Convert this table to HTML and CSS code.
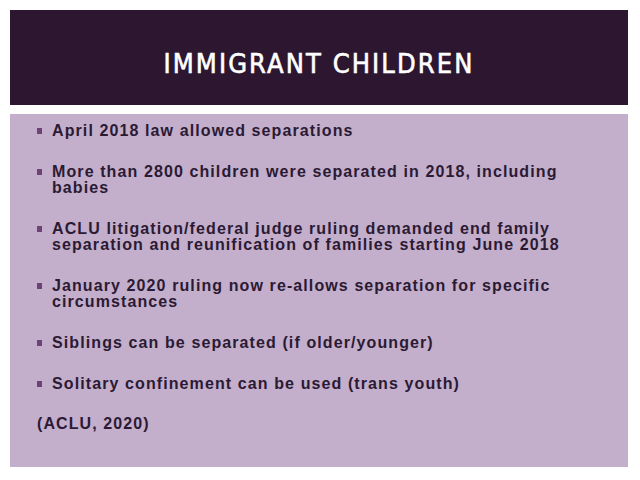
FILE: index.html
```html
<!DOCTYPE html>
<html>
<head>
<meta charset="utf-8">
<link rel="stylesheet" href="styles.css">
</head>
<body>
<div class="slide">
  <header class="title-bar">
    <h1 class="title">IMMIGRANT CHILDREN</h1>
  </header>
  <section class="content">
    <ul class="bullets">
      <li>April 2018 law allowed separations</li>
      <li>More than 2800 children were separated in 2018, including babies</li>
      <li>ACLU litigation/federal judge ruling demanded end family separation and reunification of families starting June 2018</li>
      <li>January 2020 ruling now re-allows separation for specific circumstances</li>
      <li>Siblings can be separated (if older/younger)</li>
      <li>Solitary confinement can be used (trans youth)</li>
    </ul>
    <p class="cite">(ACLU, 2020)</p>
  </section>
</div>
</body>
</html>
```
FILE: styles.css
```css
html, body {
  margin: 0;
  padding: 0;
  background: #ffffff;
}
.slide {
  width: 640px;
  height: 480px;
  box-sizing: border-box;
  padding: 10px 12px 13px 10px;
  display: flex;
  flex-direction: column;
  gap: 9px;
}
.title-bar {
  height: 95px;
  background: #2c1630;
  display: flex;
  align-items: center;
  justify-content: center;
  box-sizing: border-box;
  padding-top: 12px;
}
.title {
  margin: 0;
  color: #ffffff;
  font-family: "DejaVu Sans Condensed", "Liberation Sans", sans-serif;
  font-weight: normal;
  font-size: 27px;
  letter-spacing: 2.1px;
  -webkit-text-stroke: 0.6px #ffffff;
}
.content {
  flex: 1;
  background: #c3aecb;
  padding: 9px 40px 0 27px;
  font-family: "Liberation Sans", Arial, sans-serif;
  font-weight: bold;
  font-size: 16px;
  letter-spacing: 1.1px;
  line-height: 16px;
  color: #2b1a33;
}
.bullets {
  list-style: none;
  margin: 0;
  padding: 0;
}
.bullets li {
  position: relative;
  padding-left: 15px;
  margin-bottom: 25px;
}
.bullets li::before {
  content: "";
  position: absolute;
  left: 0;
  top: 5px;
  width: 5px;
  height: 6px;
  background: #6d4274;
}
.cite {
  margin: 0;
  margin-top: -1px;
  font-weight: bold;
}
```
